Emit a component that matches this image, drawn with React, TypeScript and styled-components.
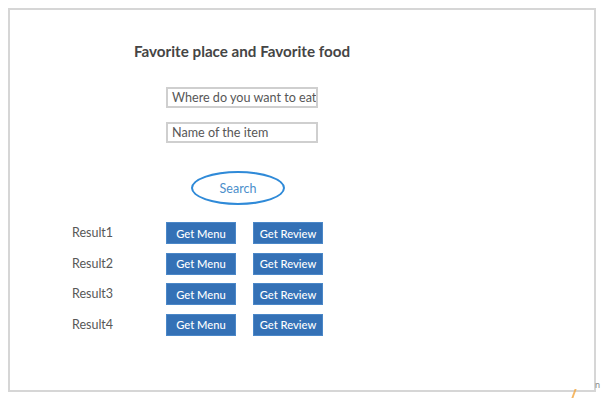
import React from "react";
import styled, { createGlobalStyle } from "styled-components";

const Global = createGlobalStyle`
  html, body { margin: 0; padding: 0; background: #ffffff; }
  body { font-family: Lato, "Open Sans", sans-serif; }
  * { box-sizing: border-box; }
`;

const Page = styled.div`
  position: relative;
  width: 602px;
  height: 401px;
  padding: 8px 0 0 8px;
`;

const Frame = styled.div`
  width: 588px;
  height: 384px;
  border: 2px solid #d6d6d6;
  display: flex;
  flex-direction: column;
  padding: 32px 0 0 0;
`;

const Title = styled.h1`
  margin: 0 0 0 124px;
  font-size: 15.2px;
  line-height: 18px;
  font-weight: 700;
  color: #454545;
`;

const Form = styled.div`
  display: flex;
  flex-direction: column;
  align-items: flex-start;
  gap: 14px;
  margin: 27px 0 0 156px;
`;

const Field = styled.div`
  width: 152px;
  height: 21px;
  border: 2px solid #cfcfcf;
  padding: 0 0 0 4px;
  font-size: 12.6px;
  line-height: 17px;
  color: #575757;
  white-space: nowrap;
  overflow: hidden;
`;

const SearchButton = styled.div`
  width: 94px;
  height: 34px;
  margin: 14px 0 0 25px;
  border: 2px solid #2f8ad8;
  border-radius: 50%;
  display: flex;
  align-items: center;
  justify-content: center;
  font-size: 12.5px;
  color: #4b8fcb;
`;

const Results = styled.div`
  display: grid;
  grid-template-columns: 77px 70px 70px;
  column-gap: 17px;
  row-gap: 8.6px;
  margin: 17px 0 0 62px;
  align-items: center;
`;

const Label = styled.div`
  font-size: 12.5px;
  color: #575757;
  line-height: 22px;
`;

const ActionButton = styled.div`
  height: 22px;
  background: #3471b6;
  border: 1px solid #4a87c8;
  color: #ffffff;
  font-size: 11.2px;
  font-weight: 500;
  display: flex;
  align-items: center;
  justify-content: center;
  white-space: nowrap;
`;

const Watermark = styled.div`
  position: absolute;
  right: 2px;
  bottom: 11px;
  font-size: 9px;
  color: #8a8a8a;
`;

const Slash = styled.div`
  position: absolute;
  left: 573px;
  top: 389px;
  width: 2px;
  height: 9px;
  background: #f3a640;
  transform: skewX(-20deg);
  opacity: 0.8;
`;

const results = ["Result1", "Result2", "Result3", "Result4"];

export default function App() {
  return (
    <>
      <Global />
      <Page>
        <Frame>
          <Title>Favorite place and Favorite food</Title>
          <Form>
            <Field>Where do you want to eat</Field>
            <Field>Name of the item</Field>
            <SearchButton>Search</SearchButton>
          </Form>
          <Results>
            {results.map((r) => (
              <React.Fragment key={r}>
                <Label>{r}</Label>
                <ActionButton>Get Menu</ActionButton>
                <ActionButton>Get Review</ActionButton>
              </React.Fragment>
            ))}
          </Results>
        </Frame>
        <Watermark>n</Watermark>
        <Slash />
      </Page>
    </>
  );
}
